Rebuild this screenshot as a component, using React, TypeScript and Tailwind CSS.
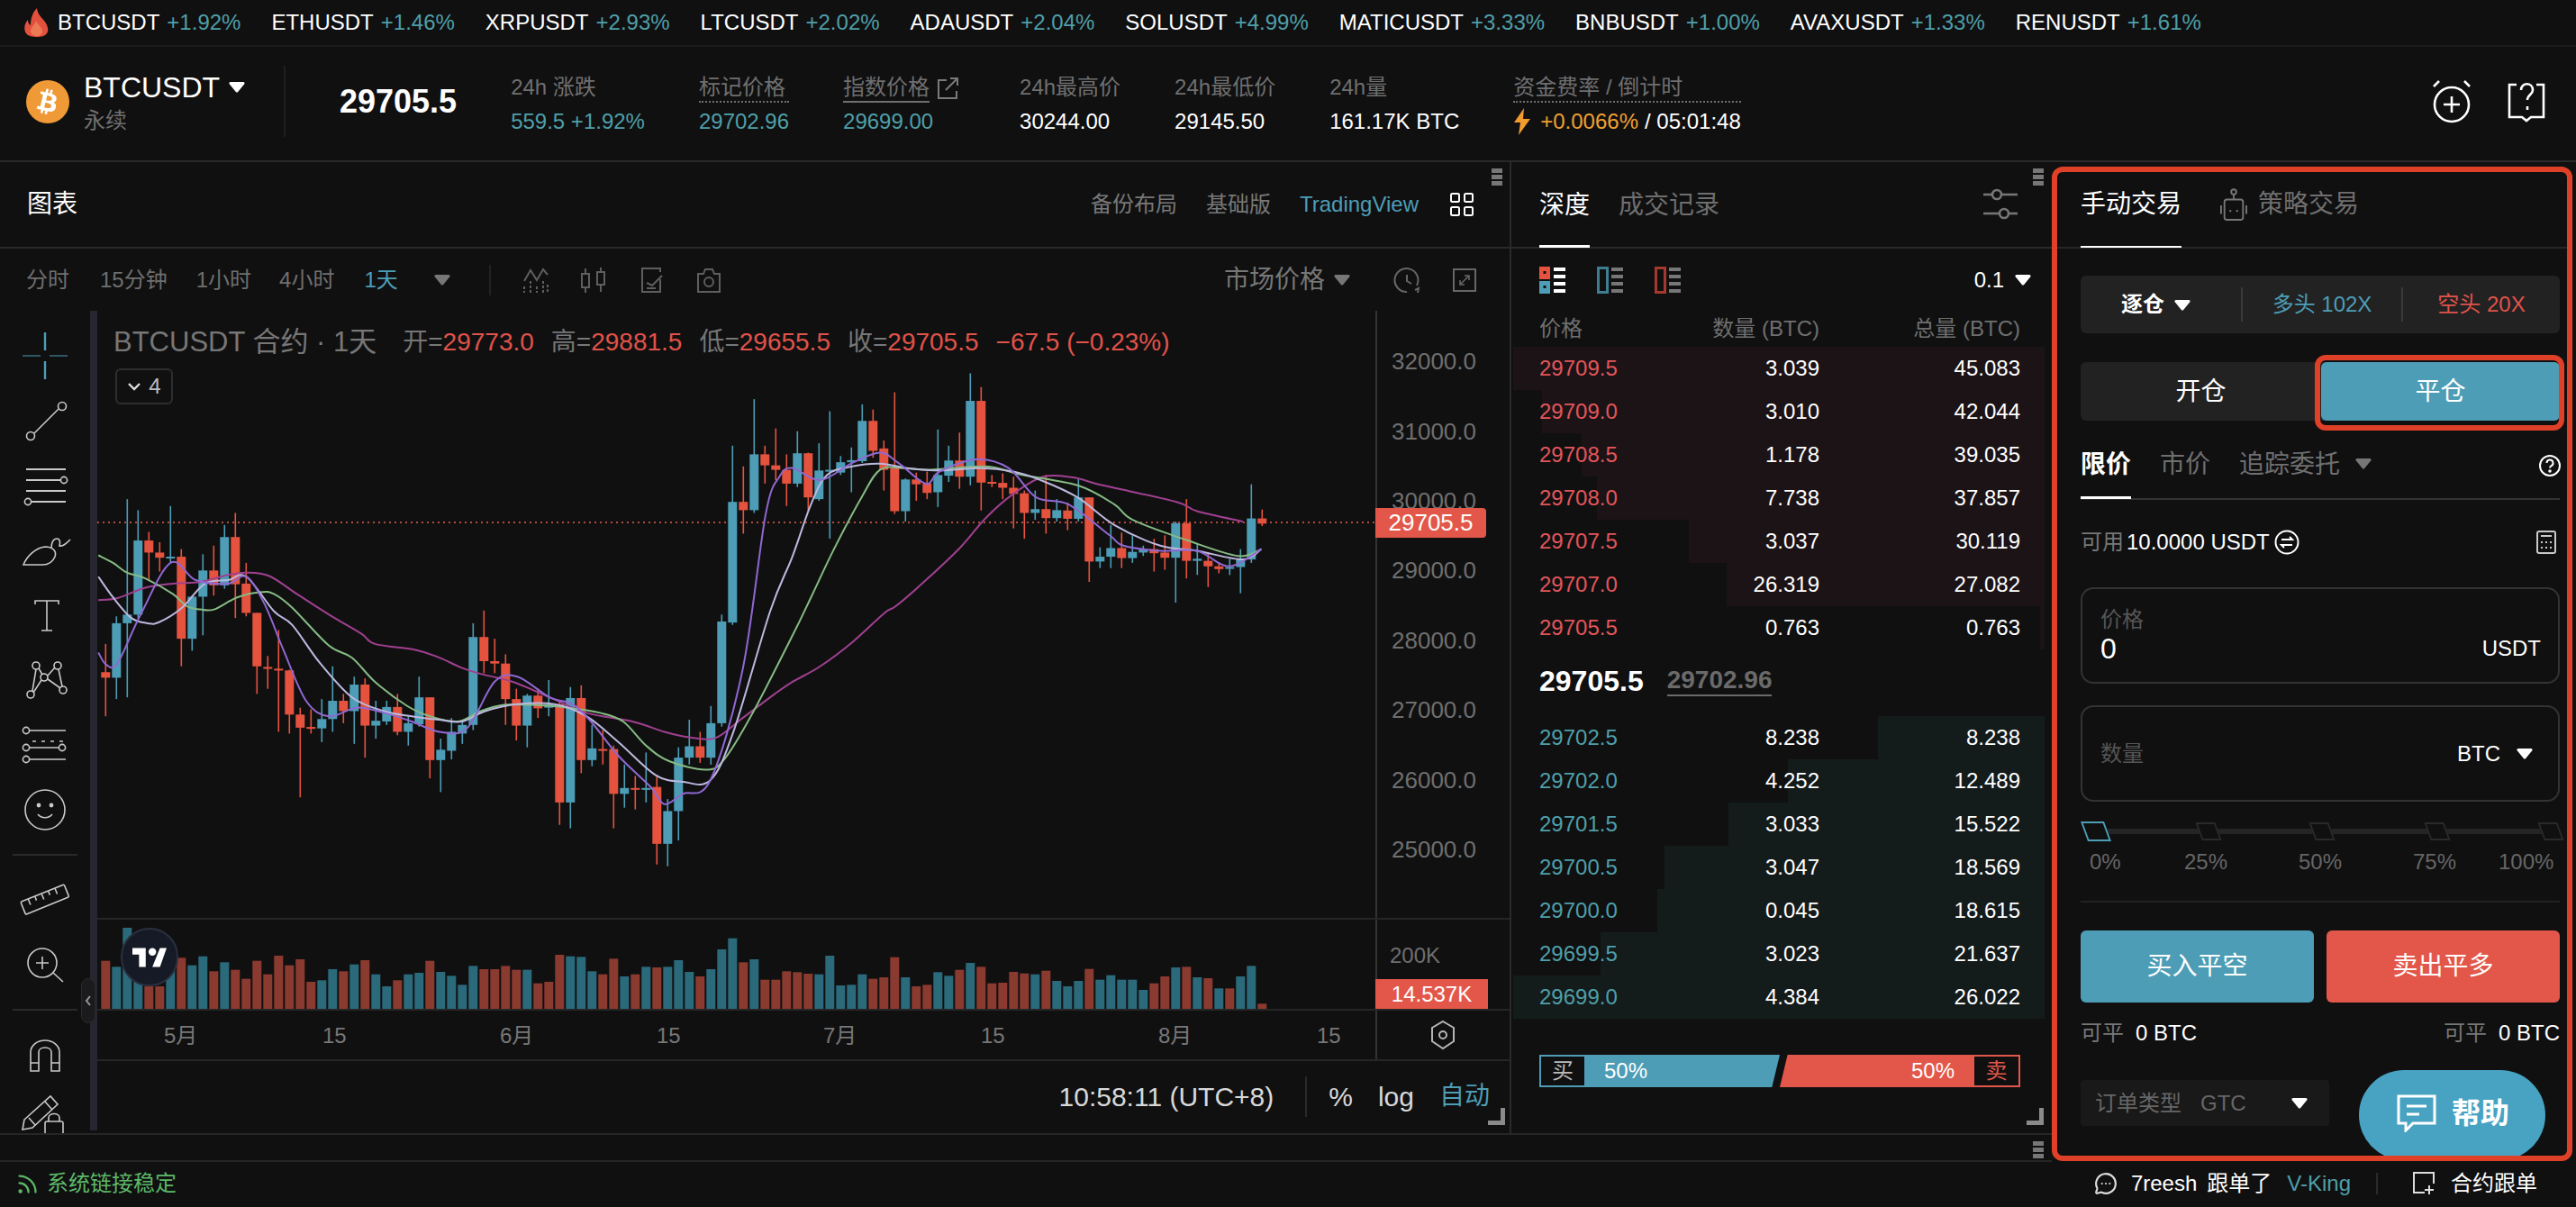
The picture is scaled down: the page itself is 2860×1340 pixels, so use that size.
import React from "react"
import { FaBtc } from "react-icons/fa"
import { MessageCircleMore, Rss } from "lucide-react"

const TEAL = "#4d9db6"
const RED = "#e5533f"

// [colour, wick top, body top, body bottom, wick bottom], y read from the chart crop
const candles: [string, number, number, number, number][] = [
  ["r", 875, 957, 973, 1085], ["b", 795, 815, 973, 1035], ["b", 455, 790, 815, 1030], ["b", 487, 575, 790, 800],
  ["r", 550, 575, 610, 690], ["r", 580, 610, 625, 665], ["b", 475, 622, 625, 640], ["r", 600, 622, 860, 940],
  ["b", 735, 738, 860, 895], ["b", 615, 662, 738, 850], ["r", 590, 662, 705, 735], ["b", 530, 565, 705, 715],
  ["r", 495, 565, 702, 800], ["r", 640, 700, 785, 795], ["r", 785, 785, 940, 1020], ["r", 910, 942, 947, 1005],
  ["r", 835, 947, 952, 1130], ["r", 950, 952, 1080, 1135], ["r", 1060, 1080, 1118, 1320], ["r", 1065, 1116, 1120, 1135],
  ["b", 1035, 1093, 1120, 1160], ["b", 940, 1040, 1093, 1130], ["r", 1020, 1040, 1070, 1105], ["b", 970, 993, 1070, 1165],
  ["r", 975, 993, 1112, 1205], ["b", 1040, 1098, 1112, 1150], ["b", 1040, 1058, 1100, 1110], ["r", 1020, 1058, 1130, 1140],
  ["b", 1085, 1105, 1130, 1170], ["b", 970, 1030, 1108, 1115], ["r", 1030, 1030, 1212, 1265], ["b", 1150, 1182, 1212, 1305],
  ["b", 1090, 1130, 1185, 1210], ["b", 1095, 1110, 1135, 1165], ["b", 815, 855, 1110, 1125], ["r", 778, 855, 925, 960],
  ["r", 860, 925, 932, 960], ["r", 905, 932, 1035, 1110], ["r", 1005, 1035, 1112, 1155], ["b", 1020, 1025, 1112, 1175],
  ["r", 1005, 1025, 1062, 1090], ["b", 980, 1050, 1060, 1085], ["r", 1040, 1050, 1335, 1400], ["b", 1000, 1032, 1335, 1410],
  ["r", 995, 1032, 1212, 1250], ["b", 1110, 1178, 1212, 1230], ["r", 1125, 1180, 1182, 1225], ["r", 1170, 1180, 1310, 1410],
  ["b", 1225, 1293, 1310, 1350], ["r", 1258, 1293, 1297, 1355], ["b", 1190, 1293, 1297, 1335], ["r", 1260, 1290, 1455, 1515],
  ["b", 1325, 1360, 1455, 1520], ["b", 1175, 1205, 1360, 1445], ["b", 1095, 1172, 1205, 1225], ["r", 1130, 1172, 1205, 1220],
  ["b", 1055, 1105, 1205, 1225], ["b", 790, 810, 1105, 1115], ["b", 300, 463, 813, 820], ["r", 360, 463, 487, 555],
  ["b", 165, 325, 487, 495], ["r", 300, 325, 357, 410], ["r", 250, 357, 370, 400], ["r", 325, 370, 410, 475],
  ["b", 258, 322, 410, 420], ["r", 320, 322, 450, 490], ["b", 293, 372, 455, 460], ["b", 200, 370, 375, 570],
  ["b", 330, 348, 378, 385], ["b", 305, 342, 348, 435], ["b", 180, 228, 345, 350], ["r", 195, 228, 315, 335],
  ["r", 285, 308, 370, 430], ["r", 145, 365, 490, 498], ["b", 395, 398, 490, 520], ["r", 378, 398, 412, 460],
  ["r", 375, 410, 437, 455], ["b", 253, 385, 435, 478], ["b", 300, 343, 387, 405], ["r", 262, 343, 390, 425],
  ["b", 90, 170, 390, 415], ["r", 130, 170, 407, 488], ["r", 385, 405, 410, 420], ["r", 380, 408, 422, 455],
  ["r", 390, 422, 440, 540], ["r", 430, 438, 495, 570], ["b", 430, 484, 495, 515], ["r", 385, 484, 510, 555],
  ["b", 455, 487, 510, 520], ["r", 465, 488, 512, 545], ["b", 395, 450, 512, 520], ["r", 450, 450, 636, 695],
  ["b", 595, 622, 636, 655], ["b", 530, 597, 622, 655], ["r", 552, 597, 626, 655], ["b", 560, 608, 626, 640],
  ["b", 590, 600, 610, 620], ["r", 570, 600, 612, 665], ["r", 560, 610, 625, 660], ["b", 520, 525, 625, 755],
  ["r", 455, 525, 634, 685], ["b", 585, 628, 634, 675], ["r", 610, 634, 650, 710], ["r", 640, 650, 658, 670],
  ["b", 628, 652, 656, 675], ["b", 600, 628, 652, 728], ["b", 412, 511, 630, 640], ["r", 485, 511, 526, 533],
]

const volumes =
  "r260 b280 b150 b300 r345 r345 b290 r250 b275 b245 r295 b265 r290 r320 r260 r305 r243 r275 r255 r330 b325 b288 r295 b272 r258 b305 b345 r325 b305 b300 r260 b297 b310 b340 b277 r288 r288 r277 r290 b290 r335 r330 r240 b245 b247 b295 r305 r253 b312 r305 b280 r282 b280 b258 b297 r312 b288 b222 b185 r265 b255 r323 r323 r295 r298 r303 b305 b243 b342 b340 b305 r320 r315 r248 b315 r345 r340 b298 b310 r290 b267 r280 r335 r333 r297 r302 b305 r293 b327 b345 b327 r287 b323 b308 b323 b323 b357 r335 r312 b282 r280 b315 r318 b352 r352 b312 b277 r403".split(
    " "
  )

type Pt = [number, number]

const maLines: { color: string; left: Pt[]; right: Pt[] }[] = [
  {
    color: "#a0408f",
    left: [[18,748],[60,742],[120,712],[180,700],[240,695],[300,675],[340,668],[390,678],[450,730],[520,790],[590,845],[620,875],[710,893],[760,915],[810,945],[850,962],[920,985],[1000,1030],[1080,1075],[1180,1100],[1250,1130],[1300,1145],[1360,1148],[1420,1090],[1490,1020]],
    right: [[0,985],[60,940],[130,870],[200,785],[225,765],[290,690],[365,595],[420,510],[480,440],[545,390],[610,392],[660,410],[720,428],[840,465],[880,490],[980,520]],
  },
  {
    color: "#86bb83",
    left: [[18,618],[50,640],[80,668],[120,685],[180,730],[210,765],[240,775],[270,775],[320,740],[370,725],[400,730],[440,770],[520,880],[570,915],[620,985],[690,1055],[740,1085],[800,1100],[850,1070],[900,1052],[960,1052],[1040,1060],[1110,1075],[1160,1100],[1210,1170],[1260,1215],[1340,1240],[1380,1210],[1440,1080]],
    right: [[0,850],[40,740],[90,600],[150,450],[190,370],[240,365],[300,370],[420,360],[500,385],[620,415],[700,470],[740,515],[860,575],[970,620],[1020,600]],
  },
  {
    color: "#bcb9de",
    left: [[18,680],[50,740],[90,800],[125,815],[150,812],[200,770],[250,700],[300,690],[340,680],[400,780],[440,820],[500,930],[570,1030],[640,1070],[700,1085],[760,1095],[810,1100],[860,1070],[930,1050],[1010,1050],[1080,1085],[1150,1160],[1230,1255],[1290,1275],[1350,1270],[1400,1130],[1480,780]],
    right: [[0,620],[40,470],[75,385],[130,360],[190,352],[250,365],[320,372],[410,365],[480,375],[540,400],[620,450],[700,530],[800,590],[880,605],[980,630],[1020,600]],
  },
  {
    color: "#9068d2",
    left: [[18,900],[35,935],[60,930],[110,790],[175,640],[230,690],[300,700],[340,680],[380,760],[420,890],[470,1040],[520,1085],[580,1060],[640,1075],[700,1100],[760,1130],[820,1120],[880,985],[930,970],[1000,1030],[1050,1050],[1090,1100],[1150,1200],[1220,1290],[1250,1340],[1290,1310],[1350,1270],[1420,950],[1470,500],[1500,390]],
    right: [[0,365],[60,400],[130,350],[190,320],[230,350],[290,410],[320,375],[400,340],[470,365],[530,450],[600,470],[690,560],[720,590],[800,605],[880,605],[950,650],[1020,600]],
  },
]

const smooth = (pts: Pt[]) => {
  let d = `M${pts[0][0]} ${pts[0][1]}`
  for (let i = 0; i < pts.length - 1; i++) {
    const p0 = pts[Math.max(i - 1, 0)]
    const p1 = pts[i]
    const p2 = pts[i + 1]
    const p3 = pts[Math.min(i + 2, pts.length - 1)]
    d += ` C${p1[0] + (p2[0] - p0[0]) / 6} ${p1[1] + (p2[1] - p0[1]) / 6} ${p2[0] - (p3[0] - p1[0]) / 6} ${p2[1] - (p3[1] - p1[1]) / 6} ${p2[0]} ${p2[1]}`
  }
  return d
}

const tickers = [
  ["ETHUSDT", "+1.46%"],
  ["XRPUSDT", "+2.93%"],
  ["LTCUSDT", "+2.02%"],
  ["ADAUSDT", "+2.04%"],
  ["SOLUSDT", "+4.99%"],
  ["MATICUSDT", "+3.33%"],
  ["BNBUSDT", "+1.00%"],
  ["AVAXUSDT", "+1.33%"],
  ["RENUSDT", "+1.61%"],
]

const asks = [
  ["29709.5", "3.039", "45.083", 590],
  ["29709.0", "3.010", "42.044", 558],
  ["29708.5", "1.178", "39.035", 514],
  ["29708.0", "7.738", "37.857", 497],
  ["29707.5", "3.037", "30.119", 395],
  ["29707.0", "26.319", "27.082", 353],
  ["29705.5", "0.763", "0.763", 5],
] as const

const bids = [
  ["29702.5", "8.238", "8.238", 185],
  ["29702.0", "4.252", "12.489", 285],
  ["29701.5", "3.033", "15.522", 351],
  ["29700.5", "3.047", "18.569", 422],
  ["29700.0", "0.045", "18.615", 430],
  ["29699.5", "3.023", "21.637", 493],
  ["29699.0", "4.384", "26.022", 590],
] as const

const Caret = ({ className = "text-white" }: { className?: string }) => (
  <svg width="18" height="13" viewBox="0 0 18 13" className={className}>
    <path d="M2 1h14c1.4 0 2 1.3 1.3 2.3L10.2 12c-.6.7-1.8.7-2.4 0L.7 3.3C0 2.3.6 1 2 1z" fill="currentColor" />
  </svg>
)

const ToolIcon = ({ children }: { children: React.ReactNode }) => (
  <svg width="60" height="60" viewBox="0 0 60 60" fill="none" stroke="#c9c9c9" strokeWidth="1.6" className="shrink-0">
    {children}
  </svg>
)

const Tools = () => (
  <div className="w-[100px] h-full shrink-0 flex flex-col items-center gap-[12px] pt-[20px] overflow-hidden">
    <ToolIcon>
      <g stroke={TEAL}>
        <path d="M5 30h20M35 30h20" strokeWidth="1.2" />
        <path d="M30 4v20M30 36v20" strokeWidth="2.4" />
      </g>
    </ToolIcon>
    <ToolIcon>
      <circle cx="14" cy="47" r="4.5" />
      <circle cx="49" cy="14" r="4.5" />
      <path d="M18 44L45 17" />
    </ToolIcon>
    <ToolIcon>
      <path d="M9 12h44M9 24h39M9 36h44M15 48h38" strokeWidth="2" />
      <circle cx="51" cy="24" r="3.6" />
      <circle cx="11" cy="48" r="3.6" />
    </ToolIcon>
    <ToolIcon>
      <path d="M6 46C10 36 20 27 30 26c9 0 13 5 11 11-2 5-6 9-14 9H6z" />
      <path d="M37 27c0-5 2-10 6-10 4 0 4 5 3 8 4 1 8-3 12-7" />
    </ToolIcon>
    <ToolIcon>
      <path d="M19 18v-4h26v4M32 14v33M26 47h12" />
    </ToolIcon>
    <ToolIcon>
      <circle cx="14" cy="46" r="4" />
      <circle cx="20" cy="14" r="4" />
      <circle cx="29" cy="27" r="4" />
      <circle cx="44" cy="14" r="4" />
      <circle cx="50" cy="41" r="4" />
      <path d="M16 42l4-24M17 44l9-14M23 17l4 7M33 25l8-9M33 29l14 10M45 18l4 19" />
    </ToolIcon>
    <ToolIcon>
      <circle cx="9" cy="14" r="3.6" />
      <circle cx="9" cy="33" r="3.6" />
      <circle cx="9" cy="46" r="3.6" />
      <circle cx="49" cy="33" r="3.6" />
      <path d="M13 14h40M13 46h40M13 33h32" />
      <path d="M16 26h36" strokeDasharray="4 6" />
    </ToolIcon>
    <ToolIcon>
      <circle cx="30" cy="30" r="22" />
      <circle cx="23" cy="25" r="1.6" fill="#c9c9c9" />
      <circle cx="37" cy="25" r="1.6" fill="#c9c9c9" />
      <path d="M22 35c4 5 12 5 16 0" />
    </ToolIcon>
    <div className="w-[72px] h-[2px] bg-[#2a2a2a] shrink-0 my-[7px]" />
    <ToolIcon>
      <g transform="rotate(-22 30 30)">
        <rect x="4" y="22" width="52" height="15" rx="1.5" />
        <path d="M13 22v7M21 22v5M29 22v7M37 22v5M45 22v7" />
      </g>
    </ToolIcon>
    <ToolIcon>
      <circle cx="27" cy="28" r="16" />
      <path d="M27 21v14M20 28h14M39 39l11 10" />
    </ToolIcon>
    <div className="w-[72px] h-[2px] bg-[#2a2a2a] shrink-0 my-[7px]" />
    <ToolIcon>
      <path d="M14 48V27c0-7 7-13 16-13s16 6 16 13v21h-9V27c0-3-3-5-7-5s-7 2-7 5v21z" />
      <path d="M14 39h9M37 39h9" />
    </ToolIcon>
    <div className="-mt-[8px] shrink-0">
      <ToolIcon>
        <path d="M7 38L36 12l8 9-28 26-11 2z" />
        <path d="M30 18l8 9M12 36l7 8" />
        <rect x="30" y="40" width="20" height="18" rx="2" />
        <path d="M34 40v-4c0-6 12-6 12 0v4" />
      </ToolIcon>
    </div>
  </div>
)

const CandleChart = () => (
  <svg width="1419" height="674" viewBox="108 345 1419 674" className="block">
    <line x1="108" y1="580" x2="1527" y2="580" stroke="#e8604f" strokeWidth="1.6" strokeDasharray="2 4" />
    {candles.map((c, i) => {
      const x = 117.3 + i * 12
      const col = c[0] === "r" ? RED : TEAL
      const y = (v: number) => 380 + v / 2.613
      return (
        <g key={i} fill={col}>
          <rect x={x - 0.8} y={y(c[1])} width="1.6" height={y(c[4]) - y(c[1])} />
          <rect x={x - 5} y={y(c[2])} width="10" height={Math.max(y(c[3]) - y(c[2]), 2)} />
        </g>
      )
    })}
    {maLines.map((m) => {
      const pts: Pt[] = [
        ...m.left.map(([x, y]): Pt => [100 + x / 1.96, 380 + y / 2.613]),
        ...m.right.map(([x, y]): Pt => [880 + x / 1.96, 380 + y / 2.613]),
      ]
      return <path key={m.color} d={smooth(pts)} fill="none" stroke={m.color} strokeWidth="2" strokeLinejoin="round" />
    })}
  </svg>
)

const VolumeChart = () => (
  <svg width="1419" height="101" viewBox="108 1021 1419 101" className="block">
    {volumes.map((v, i) => {
      const top = 980 + Number(v.slice(1)) / 3
      return (
        <rect
          key={i}
          x={112.3 + i * 12}
          y={top}
          width="10"
          height={1120 - top}
          fill={v[0] === "r" ? "#8b3a2f" : "#2b6a7b"}
        />
      )
    })}
  </svg>
)

const ChartPanel = () => (
  <div className="w-[1676px] shrink-0 flex flex-col relative">
    <div className="h-[96px] shrink-0 flex items-center border-b-2 border-[#2a2a2a] pl-[30px] pr-[40px] pb-[1px]">
      <span className="text-[28px] text-white">图表</span>
      <div className="ml-auto flex items-center text-[24px] text-[#787878]">
        <span>备份布局</span>
        <span className="ml-[32px]">基础版</span>
        <span className="ml-[32px] text-[#4d9db6]">TradingView</span>
        <svg width="26" height="26" viewBox="0 0 26 26" fill="none" stroke="#fff" strokeWidth="2" className="ml-[35px]">
          <rect x="1" y="1" width="9" height="9" rx="1.5" />
          <rect x="16" y="1" width="9" height="9" rx="1.5" />
          <rect x="1" y="16" width="9" height="9" rx="1.5" />
          <rect x="16" y="16" width="9" height="9" rx="1.5" />
        </svg>
      </div>
    </div>
    <div className="h-[69px] shrink-0 flex items-center pl-[29px] pr-[36px] text-[24px] text-[#6f6f6f]">
      <span>分时</span>
      <span className="ml-[34px]">15分钟</span>
      <span className="ml-[32px]">1小时</span>
      <span className="ml-[31px]">4小时</span>
      <span className="ml-[33px] text-[#4d9db6]">1天</span>
      <span className="ml-[40px]">
        <Caret className="text-[#777]" />
      </span>
      <span className="ml-[43px] w-[2px] h-[34px] bg-[#222]" />
      <div className="ml-[32px] flex items-center gap-[28px] text-[#5e5e5e]">
        <svg width="36" height="30" viewBox="0 0 36 30" fill="none" stroke="currentColor" strokeWidth="2">
          <path d="M5 16l7-12 7 11 7-12 5 6" />
          <path d="M5 22v7M12 16v13M19 22v7M26 16v13M31 20v9" strokeDasharray="3 2" />
        </svg>
        <svg width="36" height="30" viewBox="0 0 36 30" fill="none" stroke="currentColor" strokeWidth="2">
          <rect x="5" y="8" width="8" height="15" />
          <rect x="22" y="6" width="8" height="14" />
          <path d="M9 2v6M9 23v6M26 1v5M26 20v8" />
        </svg>
        <svg width="36" height="30" viewBox="0 0 36 30" fill="none" stroke="currentColor" strokeWidth="2">
          <path d="M28 6V2H8v26h20V14" />
          <path d="M13 18l6 3 11-11M13 24h10" />
        </svg>
        <svg width="36" height="30" viewBox="0 0 36 30" fill="none" stroke="currentColor" strokeWidth="2">
          <path d="M6 8h6l2-5h8l2 5h6v20H6z" />
          <circle cx="18" cy="17" r="5" />
        </svg>
      </div>
      <div className="ml-auto flex items-center">
        <span className="text-[28px] text-[#777]">市场价格</span>
        <span className="ml-[10px]">
          <Caret className="text-[#777]" />
        </span>
        <svg width="30" height="30" viewBox="0 0 30 30" fill="none" stroke="#666" strokeWidth="2" className="ml-[48px]">
          <path d="M26 21A13 13 0 1 0 15 28" />
          <path d="M15 9v7l5 3M24 26l4-2-1 5" />
        </svg>
        <svg width="28" height="28" viewBox="0 0 28 28" fill="none" stroke="#666" strokeWidth="2" className="ml-[35px]">
          <rect x="2" y="2" width="24" height="24" />
          <path d="M10 18l8-8M14 9h5v5M9 14v5h5" strokeWidth="1.6" />
        </svg>
      </div>
    </div>
    <div className="h-[913px] flex">
      <Tools />
      <div className="w-[8px] h-[910px] shrink-0 bg-[#26262e]" />
      <div className="flex-1 flex flex-col relative">
        <div className="h-[674px] flex">
          <CandleChart />
          <div className="flex-1 border-l-2 border-[#333] pt-[18px] pl-[16px] text-[26px] text-[#6f6f6f]">
            {["32000.0", "31000.0", "30000.0", "29000.0", "28000.0", "27000.0", "26000.0", "25000.0"].map((p) => (
              <div key={p} className="h-[77.4px] flex items-center">
                {p}
              </div>
            ))}
          </div>
        </div>
        <div className="h-[103px] flex border-y-2 border-y-[#262626]">
          <VolumeChart />
          <div className="flex-1 border-l-2 border-[#333] pl-[14px] pt-[22px] text-[24px] text-[#6f6f6f]">200K</div>
        </div>
        <div className="h-[56px] flex border-b-2 border-[#262626]">
          <div className="w-[1419px] relative text-[24px] text-[#777]">
            {[
              ["5月", "left-[74px]"],
              ["15", "left-[250px]"],
              ["6月", "left-[447px]"],
              ["15", "left-[621px]"],
              ["7月", "left-[806px]"],
              ["15", "left-[981px]"],
              ["8月", "left-[1178px]"],
              ["15", "left-[1354px]"],
            ].map(([t, pos], i) => (
              <span key={i} className={`absolute top-[10px] ${pos}`}>
                {t}
              </span>
            ))}
          </div>
          <div className="flex-1 border-l-2 border-[#333] flex items-center pl-[58px]">
            <svg width="30" height="34" viewBox="0 0 30 34" fill="none" stroke="#b5b5b5" strokeWidth="2">
              <path d="M15 2l12 7v15l-12 8-12-8V9z" />
              <circle cx="15" cy="17" r="4" />
            </svg>
          </div>
        </div>
        <div className="h-[78px] flex items-center pr-[22px] justify-end text-white">
          <span className="text-[30px] text-[#d8d8d8]">10:58:11 (UTC+8)</span>
          <span className="ml-[35px] w-[2px] h-[45px] bg-[#2a2a2a]" />
          <span className="ml-[24px] text-[30px] text-[#d8d8d8]">%</span>
          <span className="ml-[28px] text-[30px] text-[#d8d8d8]">log</span>
          <span className="ml-[28px] text-[28px] text-[#4d9db6]">自动</span>
        </div>

        <div className="absolute left-[18px] top-[17px] flex items-center text-[31px] leading-[36px] text-[#777]">
          <span>BTCUSDT 合约 · 1天</span>
          <span className="ml-[29px] flex gap-[19px] text-[28px] text-[#e0534a]">
            <span>
              <span className="text-[#777]">开=</span>29773.0
            </span>
            <span>
              <span className="text-[#777]">高=</span>29881.5
            </span>
            <span>
              <span className="text-[#777]">低=</span>29655.5
            </span>
            <span>
              <span className="text-[#777]">收=</span>29705.5
            </span>
            <span>−67.5 (−0.23%)</span>
          </span>
        </div>
        <div className="absolute left-[20px] top-[64px] w-[64px] h-[40px] flex items-center justify-center gap-[8px] border-2 border-[#2e2e2e] rounded-[6px] text-[24px] text-[#bbb] bg-[#101011]">
          <svg width="16" height="10" viewBox="0 0 16 10" fill="none" stroke="#ddd" strokeWidth="2.4">
            <path d="M2 2l6 6 6-6" />
          </svg>
          <span>4</span>
        </div>
        <div className="absolute left-[1419px] top-[219px] w-[123px] h-[33px] bg-[#e3574a] rounded-r-[4px] flex items-center justify-center text-[26px] text-white">
          29705.5
        </div>
        <div className="absolute left-[1419px] top-[742px] w-[125px] h-[33px] bg-[#e3574a] flex items-center justify-center text-[24px] text-white">
          14.537K
        </div>
        <div className="absolute left-[26px] top-[685px] w-[64px] h-[65px] rounded-full bg-[#151a26] border-2 border-[#2b3040] flex items-center justify-center">
          <svg width="38" height="30" viewBox="0 0 36 28" fill="#fff">
            <path d="M14 24H7V11H0V4h14zM29 24h-8l8-20h7z" />
            <circle cx="21" cy="8" r="4" />
          </svg>
        </div>
        <svg width="22" height="20" viewBox="0 0 22 20" fill="#8a8a8a" className="absolute right-[4px] bottom-[8px]">
          <path d="M16 0h5v19H2v-5h14z" />
        </svg>
      </div>
    </div>
    <div className="absolute left-[90px] top-[906px] w-[16px] h-[50px] rounded-[8px] bg-[#1b1b1d] border border-[#2a2a2a] flex items-center justify-center">
      <svg width="8" height="14" viewBox="0 0 8 14" fill="none" stroke="#999" strokeWidth="2">
        <path d="M6 2L2 7l4 5" />
      </svg>
    </div>
    <Handle className="absolute right-[8px] top-[7px]" />
  </div>
)

const Handle = ({ className = "" }: { className?: string }) => (
  <div className={`w-[12px] flex flex-col gap-[2px] ${className}`}>
    <span className="h-[5px] bg-[#777]" />
    <span className="h-[5px] bg-[#777]" />
    <span className="h-[5px] bg-[#777]" />
  </div>
)

const DepthRow = ({
  row,
  side,
}: {
  row: readonly [string, string, string, number]
  side: "ask" | "bid"
}) => (
  <div className="h-[48px] relative flex items-center pl-[31px] pr-[27px] text-[24px]">
    <div
      className={`absolute right-0 top-0 bottom-0 ${side === "ask" ? "bg-[#1c1316]" : "bg-[#141b1b]"}`}
      style={{ width: row[3] }}
    />
    <span className={`relative flex-1 ${side === "ask" ? "text-[#e2565a]" : "text-[#4f9fa8]"}`}>{row[0]}</span>
    <span className="relative w-[140px] text-right text-white">{row[1]}</span>
    <span className="relative w-[223px] text-right text-white">{row[2]}</span>
  </div>
)

const DepthIcon = ({ color, line }: { color: string; line: string }) => (
  <svg width="29" height="30" viewBox="0 0 29 30" fill="none">
    <rect x="1.5" y="1.5" width="10" height="27" stroke={color} strokeWidth="3" />
    <path d="M16 3h13M16 11h13M16 19h13M16 27h13" stroke={line} strokeWidth="4" />
  </svg>
)

const DepthPanel = () => (
  <div className="w-[602px] shrink-0 border-l-2 border-[#2a2a2a] flex flex-col relative">
    <div className="h-[96px] shrink-0 flex items-center border-b-2 border-[#2a2a2a] pl-[31px] pr-[34px] text-[28px] text-[#6f6f6f]">
      <div className="h-full flex items-center border-b-[3px] border-white text-white -mb-[2px] pt-[2px]">深度</div>
      <span className="ml-[32px] pt-[2px]">成交记录</span>
      <svg width="38" height="36" viewBox="0 0 38 36" fill="none" stroke="#777" strokeWidth="2.6" className="ml-auto mr-[4px]">
        <circle cx="15" cy="7" r="5" />
        <circle cx="23" cy="28" r="5" />
        <path d="M0 7h10M20 7h18M0 28h18M28 28h10" />
      </svg>
    </div>
    <div className="h-[69px] shrink-0 flex items-center pl-[31px] pr-[23px] gap-[35px]">
      <svg width="29" height="30" viewBox="0 0 29 30">
        <rect x="0" y="0" width="12" height="14" fill="#e5533f" />
        <rect x="0" y="16" width="12" height="14" fill="#4d9db6" />
        <rect x="4.5" y="5" width="3" height="3" fill="#101011" />
        <rect x="4.5" y="21" width="3" height="3" fill="#101011" />
        <path d="M16 3h13M16 11h13M16 19h13M16 27h13" stroke="#fff" strokeWidth="4" />
      </svg>
      <DepthIcon color="#3f7d92" line="#777" />
      <DepthIcon color="#a6392e" line="#777" />
      <div className="ml-auto flex items-center gap-[12px] text-[24px] text-white">
        <span>0.1</span>
        <Caret />
      </div>
    </div>
    <div className="flex items-center h-[40px] pl-[31px] pr-[35px] text-[24px] text-[#6f6f6f]">
      <span className="flex-1">价格</span>
      <span className="w-[180px] text-right">数量 (BTC)</span>
      <span className="w-[223px] text-right">总量 (BTC)</span>
    </div>
    <div className="pr-[8px]">
      {asks.map((r) => (
        <DepthRow key={r[0]} row={r} side="ask" />
      ))}
    </div>
    <div className="h-[74px] flex items-center pl-[31px] pb-[4px]">
      <span className="text-[32px] font-bold text-white">29705.5</span>
      <span className="ml-[26px] text-[28px] font-bold text-[#6a6a6a] border-b-2 border-[#6a6a6a] leading-[32px]">29702.96</span>
    </div>
    <div className="pr-[8px]">
      {bids.map((r) => (
        <DepthRow key={r[0]} row={r} side="bid" />
      ))}
    </div>
    <div className="mt-[40px] ml-[31px] w-[534px] h-[36px] flex items-stretch text-[24px] text-white">
      <div className="w-[50px] border-2 border-r-0 border-[#4d9db6] flex items-center justify-center text-[#bbb]">买</div>
      <div className="w-[217px] bg-[#4d9db6] flex items-center pl-[22px] [clip-path:polygon(0_0,100%_0,96%_100%,0_100%)]">50%</div>
      <div className="w-[216px] bg-[#e3574a] flex items-center justify-end pr-[22px] [clip-path:polygon(4%_0,100%_0,100%_100%,0_100%)]">50%</div>
      <div className="flex-1 border-2 border-l-0 border-[#e3574a] flex items-center justify-center text-[#e3574a]">卖</div>
    </div>
    <svg width="22" height="20" viewBox="0 0 22 20" fill="#8a8a8a" className="absolute right-[8px] bottom-[8px]">
      <path d="M16 0h5v19H2v-5h14z" />
    </svg>
    <Handle className="absolute right-[9px] top-[7px]" />
  </div>
)

const OrderPanel = () => (
  <div className="w-[578px] h-[1104px] mt-[5px] shrink-0 border-[6px] border-[#df4128] rounded-[12px] relative overflow-hidden">
    <div className="h-[85px] flex items-center border-b-2 border-[#262626] pl-[26px] text-[28px] text-[#6f6f6f]">
      <div className="h-full flex items-center border-b-2 border-white text-white pb-[12px] -mb-[2px]">手动交易</div>
      <svg width="30" height="38" viewBox="0 0 32 40" fill="none" stroke="#777" strokeWidth="2" className="ml-[43px] mb-[10px]">
        <circle cx="16" cy="4" r="3" />
        <path d="M16 7v6" />
        <rect x="5" y="13" width="22" height="24" rx="3" />
        <path d="M1 20v10M31 20v10M11 26l2 1M21 26l-2 1" />
      </svg>
      <span className="ml-[12px] pb-[12px]">策略交易</span>
    </div>
    <div className="pl-[26px] pr-[8px]">
      <div className="mt-[30px] h-[64px] bg-[#222] rounded-[6px] flex items-center text-[24px]">
        <div className="w-[178px] flex items-center pl-[45px] gap-[11px] text-white font-bold">
          <span>逐仓</span>
          <Caret />
        </div>
        <span className="w-[2px] h-[38px] bg-[#3a3a3a]" />
        <div className="w-[176px] text-center text-[#4d9db6]">多头 102X</div>
        <span className="w-[2px] h-[38px] bg-[#3a3a3a]" />
        <div className="flex-1 text-center text-[#e0534a]">空头 20X</div>
      </div>
      <div className="mt-[32px] h-[65px] bg-[#222] rounded-[6px] flex text-[28px] text-white">
        <div className="w-[267px] flex items-center justify-center">开仓</div>
        <div className="flex-1 bg-[#4d9db6] rounded-[6px] flex items-center justify-center relative">
          平仓
          <div className="absolute -left-[7px] -right-[5px] -top-[8px] -bottom-[11px] border-[6px] border-[#df4128] rounded-[12px]" />
        </div>
      </div>
      <div className="h-[88px] relative border-b-2 border-[#333] flex items-start pt-[33px] text-[28px] leading-[32px] text-[#6f6f6f]">
        <div className="absolute left-0 bottom-[-1px] w-[56px] h-[3px] bg-white" />
        <span className="text-white font-bold">限价</span>
        <span className="ml-[32px]">市价</span>
        <span className="ml-[32px]">追踪委托</span>
        <span className="ml-[17px] mt-[8px]">
          <Caret className="text-[#777]" />
        </span>
        <svg width="26" height="26" viewBox="0 0 26 26" fill="none" stroke="#fff" strokeWidth="2" className="ml-auto mt-[4px] mr-[-2px]">
          <circle cx="13" cy="13" r="11" />
          <path d="M9.5 10a3.5 3.5 0 1 1 5 3.2c-1 .6-1.5 1.2-1.5 2.3" />
          <circle cx="13" cy="19" r=".8" fill="#fff" />
        </svg>
      </div>
      <div className="mt-[32px] h-[30px] flex items-center text-[24px] text-white">
        <span className="text-[#777]">可用</span>
        <span className="ml-[3px]">10.0000 USDT</span>
        <svg width="28" height="28" viewBox="0 0 28 28" fill="none" stroke="#fff" strokeWidth="2" className="ml-[5px]">
          <circle cx="14" cy="14" r="12.5" />
          <path d="M8 11h12l-3-3M20 17H8l3 3" />
        </svg>
        <svg width="22" height="26" viewBox="0 0 22 26" fill="none" stroke="#c9c9c9" strokeWidth="2" className="ml-auto mr-[4px]">
          <rect x="1" y="1" width="20" height="24" rx="2" />
          <path d="M5 6h12M5 13h2M10 13h2M15 13h2M5 19h2M10 19h2M15 19h2" />
        </svg>
      </div>
      <div className="mt-[35px] h-[107px] border-2 border-[#333] rounded-[14px] relative pl-[20px] pr-[19px]">
        <div className="pt-[20px] text-[24px] leading-[28px] text-[#555]">价格</div>
        <div className="flex items-center justify-between leading-[36px]">
          <span className="text-[32px] text-white">0</span>
          <span className="text-[24px] text-white">USDT</span>
        </div>
      </div>
      <div className="mt-[24px] h-[107px] border-2 border-[#333] rounded-[14px] flex items-center pl-[20px] pr-[28px] text-[24px]">
        <span className="text-[#555]">数量</span>
        <span className="ml-auto text-white">BTC</span>
        <span className="ml-[18px]">
          <Caret />
        </span>
      </div>
      <div className="mt-[22px] h-[22px] relative">
        <div className="absolute left-[30px] right-0 top-[8px] h-[6px] bg-[#252525]" />
        <div className="absolute left-[4px] top-0 w-[26px] h-[22px] border-2 border-[#4d9db6] bg-[#101011] skew-x-[20deg]" />
        <div className="absolute left-[131px] top-[1px] w-[22px] h-[20px] border-2 border-[#2a2a2a] bg-[#101011] skew-x-[20deg]" />
        <div className="absolute left-[257px] top-[1px] w-[22px] h-[20px] border-2 border-[#2a2a2a] bg-[#101011] skew-x-[20deg]" />
        <div className="absolute left-[385px] top-[1px] w-[22px] h-[20px] border-2 border-[#2a2a2a] bg-[#101011] skew-x-[20deg]" />
        <div className="absolute left-[511px] top-[1px] w-[22px] h-[20px] border-2 border-[#2a2a2a] bg-[#101011] skew-x-[20deg]" />
      </div>
      <div className="mt-[9px] pl-[10px] flex text-[24px] leading-[28px] text-[#666]">
        <span className="w-[105px]">0%</span>
        <span className="w-[127px]">25%</span>
        <span className="w-[127px]">50%</span>
        <span className="w-[95px]">75%</span>
        <span>100%</span>
      </div>
      <div className="mt-[29px] h-[2px] bg-[#222]" />
      <div className="mt-[31px] flex justify-between text-[28px] text-white">
        <div className="w-[259px] h-[80px] bg-[#4d9db6] rounded-[6px] flex items-center justify-center">买入平空</div>
        <div className="w-[259px] h-[80px] bg-[#e3574a] rounded-[6px] flex items-center justify-center">卖出平多</div>
      </div>
      <div className="mt-[20px] flex justify-between text-[24px] leading-[28px] text-white">
        <span>
          <span className="text-[#777] mr-[13px]">可平</span>0 BTC
        </span>
        <span>
          <span className="text-[#777] mr-[13px]">可平</span>0 BTC
        </span>
      </div>
      <div className="mt-[38px] w-[276px] h-[51px] bg-[#191919] rounded-[4px] flex items-center pl-[16px] text-[24px] text-[#666]">
        <span>订单类型</span>
        <span className="ml-[21px]">GTC</span>
        <span className="ml-[50px]">
          <Caret />
        </span>
      </div>
    </div>
    <div className="absolute left-[335px] top-[997px] w-[207px] h-[100px] rounded-full bg-[#48a3c3] flex items-center pl-[42px] pb-[4px] text-[32px] font-bold text-white">
      <svg width="44" height="42" viewBox="0 0 44 42" fill="none" stroke="#fff" strokeWidth="3">
        <path d="M2 2h40v30H18l-8 8v-8H2z" />
        <path d="M11 13h22M11 22h14" />
      </svg>
      <span className="ml-[17px]">帮助</span>
    </div>
  </div>
)

export default function App() {
  return (
    <div className="w-[2860px] h-[1340px] overflow-hidden bg-[#101011] flex flex-col [font-family:'Liberation_Sans','Noto_Sans_CJK_SC',sans-serif]">
      <div className="h-[52px] shrink-0 flex items-center gap-[34px] pl-[27px] border-b-2 border-[#1b1b1b] text-[24px]">
        <div className="flex items-center">
          <svg width="27" height="32" viewBox="0 0 27 32" className="mr-[10px]">
            <path d="M14 0c1 7 4 9 8 14 5 6 5 12 3 14-2 3-6 4-11 4S4 31 2 28c-3-4-2-11 2-15 0 3 1 5 3 6C7 12 9 5 14 0z" fill="#e2513d" />
            <path d="M13 14c1 4 7 7 7 12 0 3-3 5-6 5s-7-2-7-5c0-5 5-7 6-12z" fill="#ee7a55" />
          </svg>
          <span className="text-white">BTCUSDT</span>
          <span className="ml-[8px] text-[#4f9fa8]">+1.92%</span>
        </div>
        {tickers.map(([n, p]) => (
          <div key={n} className="flex items-center">
            <span className="text-white">{n}</span>
            <span className="ml-[8px] text-[#4f9fa8]">{p}</span>
          </div>
        ))}
      </div>

      <div className="h-[128px] shrink-0 flex items-start gap-[60px] border-b-2 border-[#2a2a2a] text-[24px] leading-[30px]">
        <div className="w-[317px] h-[79px] mt-[21px] border-r-2 border-[#1f1f1f] flex items-center pl-[29px] shrink-0">
          <div className="w-[48px] h-[48px] rounded-full bg-[#ef9a36] flex items-center justify-center">
            <FaBtc className="text-white text-[28px] rotate-[14deg]" />
          </div>
          <div className="ml-[16px]">
            <div className="flex items-center gap-[10px] text-[32px] leading-[40px] text-white">
              BTCUSDT
              <Caret />
            </div>
            <div className="text-[24px] leading-[30px] text-[#6f6f6f] mt-[2px]">永续</div>
          </div>
        </div>
        <div className="mt-[38px] text-[36px] font-bold leading-[46px] text-white">29705.5</div>
        <div className="mt-[30px] shrink-0">
          <div className="text-[#6f6f6f]">24h 涨跌</div>
          <div className="mt-[8px] text-[#4f9fa8]">559.5 +1.92%</div>
        </div>
        <div className="mt-[30px] shrink-0">
          <div className="text-[#6f6f6f] border-b-2 border-dotted border-[#6f6f6f]">标记价格</div>
          <div className="mt-[6px] text-[#4f9fa8]">29702.96</div>
        </div>
        <div className="mt-[30px] shrink-0 w-[136px]">
          <div className="flex items-center gap-[8px] text-[#6f6f6f]">
            <span className="border-b-2 border-[#6f6f6f]">指数价格</span>
            <svg width="24" height="26" viewBox="0 0 24 26" fill="none" stroke="#7a7a7a" strokeWidth="2">
              <path d="M11 4H2v20h20v-8M10 15L22 3M15 2h8v8" />
            </svg>
          </div>
          <div className="mt-[6px] text-[#4f9fa8]">29699.00</div>
        </div>
        <div className="mt-[30px] shrink-0">
          <div className="text-[#6f6f6f]">24h最高价</div>
          <div className="mt-[8px] text-white">30244.00</div>
        </div>
        <div className="mt-[30px] shrink-0">
          <div className="text-[#6f6f6f]">24h最低价</div>
          <div className="mt-[8px] text-white">29145.50</div>
        </div>
        <div className="mt-[30px] shrink-0">
          <div className="text-[#6f6f6f]">24h量</div>
          <div className="mt-[8px] text-white">161.17K BTC</div>
        </div>
        <div className="mt-[30px] shrink-0">
          <div className="text-[#6f6f6f] border-b-2 border-dotted border-[#6f6f6f]">资金费率 / 倒计时</div>
          <div className="mt-[6px] flex items-center text-white">
            <svg width="20" height="30" viewBox="0 0 20 30" className="mr-[10px]">
              <path d="M12 0L1 16h7L6 30l13-18h-8z" fill="#f09a30" />
            </svg>
            <span className="text-[#f0a030]">+0.0066%</span>
            <span className="ml-[7px]">/ 05:01:48</span>
          </div>
        </div>
        <div className="ml-auto mr-[34px] mt-[36px] flex items-center gap-[40px]">
          <svg width="44" height="50" viewBox="0 0 44 50" fill="none" stroke="#fff" strokeWidth="2.6">
            <circle cx="22" cy="28" r="19" />
            <path d="M22 19v18M13 28h18M2 8l6-6M42 8l-6-6" />
          </svg>
          <svg width="42" height="46" viewBox="0 0 42 46" fill="none" stroke="#fff" strokeWidth="2.6">
            <path d="M10 4H2v36h14l5 4 5-4h14V4h-8" />
            <path d="M15 10c0-9 13-9 13 0 0 5-6 5-6 11" />
            <path d="M22 28v4" />
          </svg>
        </div>
      </div>

      <div className="h-[1110px] shrink-0 flex">
        <div className="w-[2278px] shrink-0 flex flex-col">
          <div className="h-[1078px] flex">
            <ChartPanel />
            <DepthPanel />
          </div>
          <div className="h-[32px] border-y-2 border-y-[#262626] relative">
            <Handle className="absolute right-[9px] top-[7px]" />
          </div>
        </div>
        <OrderPanel />
      </div>

      <div className="flex-1 flex items-center text-[24px] text-white pb-[2px]">
        <Rss size={27} className="ml-[17px] text-[#5cb868]" />
        <span className="ml-[8px] text-[#5cb868]">系统链接稳定</span>
        <div className="ml-auto flex items-center pr-[43px]">
          <MessageCircleMore size={26} className="text-[#ddd]" />
          <span className="ml-[15px]">7reesh</span>
          <span className="ml-[11px]">跟单了</span>
          <span className="ml-[17px] text-[#4f9fa8]">V-King</span>
          <span className="ml-[28px] w-[2px] h-[24px] bg-[#2a2a2a]" />
          <svg width="26" height="28" viewBox="0 0 26 28" fill="none" stroke="#ddd" strokeWidth="2" className="ml-[38px]">
            <path d="M14 24H2V2h22v12M19 16v10M14 21h10" />
          </svg>
          <span className="ml-[17px]">合约跟单</span>
        </div>
      </div>
    </div>
  )
}
